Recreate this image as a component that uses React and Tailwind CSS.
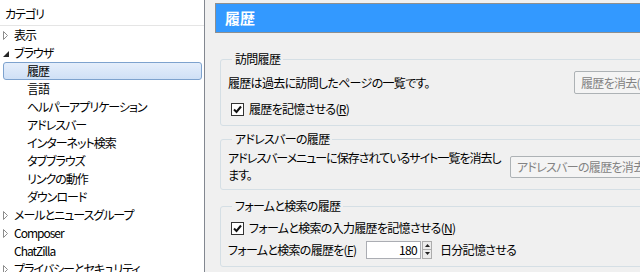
import React from "react"

const tree = [
  { label: "表示", level: 1, arrow: "closed" },
  { label: "ブラウザ", level: 1, arrow: "open" },
  { label: "履歴", level: 2, selected: true },
  { label: "言語", level: 2 },
  { label: "ヘルパーアプリケーション", level: 2 },
  { label: "アドレスバー", level: 2 },
  { label: "インターネット検索", level: 2 },
  { label: "タブブラウズ", level: 2 },
  { label: "リンクの動作", level: 2 },
  { label: "ダウンロード", level: 2 },
  { label: "メールとニュースグループ", level: 1, arrow: "closed" },
  { label: "Composer", level: 1, arrow: "closed" },
  { label: "ChatZilla", level: 1 },
  { label: "プライバシーとセキュリティ", level: 1, arrow: "closed" },
]

function Arrow({ kind }) {
  if (kind === "open") {
    return (
      <svg width="6" height="6" viewBox="0 0 6 6" className="absolute left-[3px] top-[7px]">
        <polygon points="6,0 6,6 0,6" fill="#262626" />
      </svg>
    )
  }
  return (
    <svg width="5" height="9" viewBox="0 0 5 9" className="absolute left-[3px] top-[5px]">
      <polygon points="0.5,0.5 4.5,4.5 0.5,8.5" fill="none" stroke="#8c8c8c" strokeWidth="1" />
    </svg>
  )
}

function Checkbox() {
  return (
    <span className="flex h-[13px] w-[13px] shrink-0 items-center justify-center border border-[#333] bg-white">
      <svg width="11" height="11" viewBox="0 0 11 11">
        <path d="M2 5.5 L4.5 8 L9 2.5" fill="none" stroke="#111" strokeWidth="2" />
      </svg>
    </span>
  )
}

function GroupBox({ title, className, children }) {
  return (
    <fieldset className={"ml-[5px] w-[470px] rounded-[3px] border border-[#d5dfe5] pl-[7px] " + className}>
      <legend className="ml-[4px] px-[3px] leading-[16px]">{title}</legend>
      {children}
    </fieldset>
  )
}

function Button({ children, className }) {
  return (
    <div
      className={
        "flex h-[22px] shrink-0 items-center whitespace-nowrap rounded-[2px] border border-[#adb2b5] bg-[#f4f4f4] px-[6px] text-[#838383] " +
        className
      }
    >
      {children}
    </div>
  )
}

export default function App() {
  return (
    <div className="flex h-[272px] w-[640px] overflow-hidden bg-[#f0f0f0] text-[12px] tracking-[-0.7px] text-black [font-family:'Noto_Sans_CJK_JP','Noto_Sans',sans-serif] [font-feature-settings:'palt']">
      {/* Category tree */}
      <div className="w-[205px] shrink-0 border-r border-[#828790] bg-white tracking-[-1px]">
        <div className="flex h-[26px] items-center border-b border-[#e5e5e5] pl-[5px] pt-[2px]">カテゴリ</div>
        {tree.map((item, idx) => (
          <div key={idx} className="relative h-[18px]">
            {item.selected && (
              <div className="absolute left-[3px] right-[2px] top-0 h-[18px] rounded-[3px] border border-[#7da2ce] bg-gradient-to-b from-[#e5eefb] to-[#cfe0f6]" />
            )}
            {item.arrow && <Arrow kind={item.arrow} />}
            <span
              className={
                "relative block whitespace-nowrap leading-[18px] " + (item.level === 2 ? "pl-[27px]" : "pl-[14px]")
              }
            >
              {item.label}
            </span>
          </div>
        ))}
      </div>

      {/* Settings pane */}
      <div className="min-w-0 flex-1 pl-[10px] pt-[3px]">
        <div className="flex h-[30px] w-[480px] items-center border border-[#8e8f8f] bg-[#3399ff] pl-[9px] text-[15px] font-bold tracking-normal text-white">
          履歴
        </div>

        <GroupBox title="訪問履歴" className="mt-[18px] pb-[8px]">
          <div className="mt-[4px] flex h-[23px] items-center">
            <span className="w-[346px] shrink-0 whitespace-nowrap">履歴は過去に訪問したページの一覧です。</span>
            <Button className="h-[23px]">履歴を消去(C)</Button>
          </div>
          <div className="mt-[7px] flex h-[16px] items-center gap-[5px] pl-[3px]">
            <Checkbox />
            <span className="whitespace-nowrap">
              履歴を記憶させる(<span className="underline">R</span>)
            </span>
          </div>
        </GroupBox>

        <GroupBox title="アドレスバーの履歴" className="mt-[5px] pb-[6px]">
          <div className="flex items-start">
            <p className="mt-[2px] w-[276px] shrink-0 whitespace-nowrap leading-[17px] tracking-[-1px]">
              アドレスバーメニューに保存されているサイト一覧を消去し
              <br />
              ます。
            </p>
            <Button className="ml-[6px] mt-[9px]">アドレスバーの履歴を消去(A)</Button>
          </div>
        </GroupBox>

        <GroupBox title="フォームと検索の履歴" className="mt-[8px] pb-[8px]">
          <div className="mt-[6px] flex h-[16px] items-center gap-[5px] pl-[3px]">
            <Checkbox />
            <span className="whitespace-nowrap">
              フォームと検索の入力履歴を記憶させる(<span className="underline">N</span>)
            </span>
          </div>
          <div className="mt-[5px] flex h-[17px] items-center">
            <span className="w-[138px] shrink-0 whitespace-nowrap">
              フォームと検索の履歴を(<span className="underline">F</span>)
            </span>
            <div className="flex h-[18px] w-[55px] items-center justify-end border border-[#abadb3] bg-white pr-[3px]">
              180
            </div>
            <div className="ml-[1px] flex h-[18px] w-[10px] flex-col">
              <div className="flex h-[9px] items-center justify-center border border-[#acacac] bg-[#ececec]">
                <svg width="5" height="3" viewBox="0 0 5 3">
                  <polygon points="0,3 2.5,0 5,3" fill="#222" />
                </svg>
              </div>
              <div className="flex h-[9px] items-center justify-center border border-t-0 border-[#acacac] bg-[#ececec]">
                <svg width="5" height="3" viewBox="0 0 5 3">
                  <polygon points="0,0 2.5,3 5,0" fill="#222" />
                </svg>
              </div>
            </div>
            <span className="ml-[8px] whitespace-nowrap">日分記憶させる</span>
          </div>
        </GroupBox>
      </div>
    </div>
  )
}
